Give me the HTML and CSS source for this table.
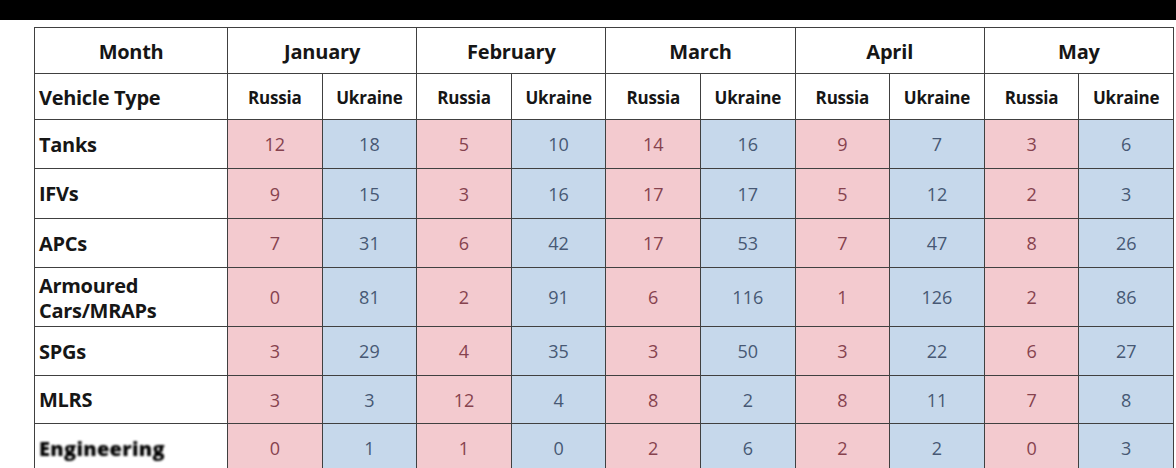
FILE: index.html
```html
<!DOCTYPE html>
<html>
<head>
<meta charset="utf-8">
<link rel="stylesheet" href="styles.css">
</head>
<body>
<div class="topbar"></div>
<div class="sheet">
<table class="losses">
<colgroup>
<col class="c-label">
<col><col><col><col><col><col><col><col><col><col>
</colgroup>
<thead>
<tr class="r-month">
<th class="label center">Month</th>
<th colspan="2">January</th>
<th colspan="2">February</th>
<th colspan="2">March</th>
<th colspan="2">April</th>
<th colspan="2">May</th>
</tr>
<tr class="r-side">
<th class="label">Vehicle Type</th>
<th class="side">Russia</th><th class="side">Ukraine</th>
<th class="side">Russia</th><th class="side">Ukraine</th>
<th class="side">Russia</th><th class="side">Ukraine</th>
<th class="side">Russia</th><th class="side">Ukraine</th>
<th class="side">Russia</th><th class="side">Ukraine</th>
</tr>
</thead>
<tbody>
<tr class="r49"><th class="label">Tanks</th>
<td class="ru">12</td><td class="ua">18</td><td class="ru">5</td><td class="ua">10</td><td class="ru">14</td><td class="ua">16</td><td class="ru">9</td><td class="ua">7</td><td class="ru">3</td><td class="ua">6</td></tr>
<tr class="r50"><th class="label">IFVs</th>
<td class="ru">9</td><td class="ua">15</td><td class="ru">3</td><td class="ua">16</td><td class="ru">17</td><td class="ua">17</td><td class="ru">5</td><td class="ua">12</td><td class="ru">2</td><td class="ua">3</td></tr>
<tr class="r49"><th class="label">APCs</th>
<td class="ru">7</td><td class="ua">31</td><td class="ru">6</td><td class="ua">42</td><td class="ru">17</td><td class="ua">53</td><td class="ru">7</td><td class="ua">47</td><td class="ru">8</td><td class="ua">26</td></tr>
<tr class="r59"><th class="label two">Armoured<br>Cars/MRAPs</th>
<td class="ru">0</td><td class="ua">81</td><td class="ru">2</td><td class="ua">91</td><td class="ru">6</td><td class="ua">116</td><td class="ru">1</td><td class="ua">126</td><td class="ru">2</td><td class="ua">86</td></tr>
<tr class="r49"><th class="label">SPGs</th>
<td class="ru">3</td><td class="ua">29</td><td class="ru">4</td><td class="ua">35</td><td class="ru">3</td><td class="ua">50</td><td class="ru">3</td><td class="ua">22</td><td class="ru">6</td><td class="ua">27</td></tr>
<tr class="r48"><th class="label">MLRS</th>
<td class="ru">3</td><td class="ua">3</td><td class="ru">12</td><td class="ua">4</td><td class="ru">8</td><td class="ua">2</td><td class="ru">8</td><td class="ua">11</td><td class="ru">7</td><td class="ua">8</td></tr>
<tr class="r49"><th class="label"><span class="blurred">Engineering</span></th>
<td class="ru">0</td><td class="ua">1</td><td class="ru">1</td><td class="ua">0</td><td class="ru">2</td><td class="ua">6</td><td class="ru">2</td><td class="ua">2</td><td class="ru">0</td><td class="ua">3</td></tr>
</tbody>
</table>
</div>
</body>
</html>
```
FILE: styles.css
```css
html, body {
  margin: 0;
  padding: 0;
  background: #ffffff;
  overflow: hidden;
}
body {
  width: 1176px;
  height: 468px;
  font-family: "Open Sans", "Noto Sans", sans-serif;
}
.topbar {
  height: 20px;
  background: #000;
}
.sheet {
  padding: 7px 0 0 34px;
}
.losses {
  border-collapse: collapse;
  table-layout: fixed;
  width: 1139px;
  color: #161616;
}
.losses col { width: 94.6px; }
.losses col.c-label { width: 193px; }
.losses th, .losses td {
  border: 1px solid #404040;
  padding: 0;
  text-align: center;
  vertical-align: middle;
}
.losses thead th {
  font-weight: 700;
  font-size: 20px;
  letter-spacing: -0.2px;
  background: #fff;
  padding-top: 2px;
}
.r-month { height: 46px; }
.r-side { height: 46px; }
.losses th.side {
  font-size: 17px;
  letter-spacing: -0.2px;
}
.losses th.label {
  text-align: left;
  padding-left: 4px;
  font-size: 20px;
  font-weight: 700;
  letter-spacing: -0.3px;
  background: #fff;
  line-height: 25px;
}
.losses th.label.center {
  text-align: center;
  padding-left: 0;
}
.losses th.two { padding-top: 2px; }
.r48 { height: 48px; }
.r49 { height: 49px; }
.r50 { height: 50px; }
.r59 { height: 59px; }
.losses td {
  font-size: 18px;
  font-weight: 400;
}
.losses td.ru {
  background: #f3cacf;
  color: #86424e;
}
.losses td.ua {
  background: #c6d8eb;
  color: #475874;
}
.blurred {
  display: inline-block;
  filter: blur(1px);
  color: #000;
  font-weight: 800;
  letter-spacing: 0.3px;
}
```
